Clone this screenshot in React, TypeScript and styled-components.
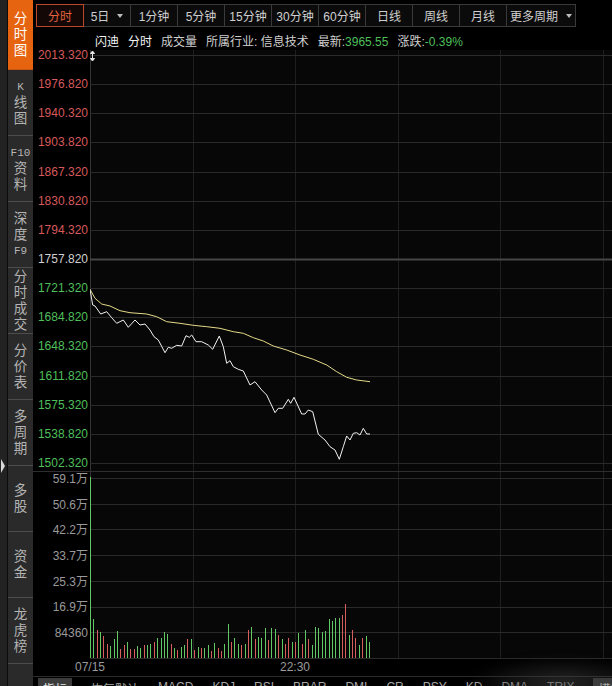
import React from 'react';
import styled, { createGlobalStyle } from 'styled-components';

const GlobalStyle = createGlobalStyle`
  html, body {
    margin: 0;
    padding: 0;
    background: #000;
  }
  body {
    font-family: "Liberation Sans", "Noto Sans CJK SC", sans-serif;
    overflow: hidden;
  }
`;

const PLOT_W = 522;
const PRICE_H = 421;
const VOL_H = 187;
const COL_W = 102.5;
const ROW_H = 29.14;
const VOL_ROW = 25.7;

type Tone = 'up' | 'down' | 'flat' | 'muted';

const toneColor: Record<Tone, string> = {
  up: '#d65a5a',
  down: '#4fbf5b',
  flat: '#cfcfcf',
  muted: '#9a9a9a',
};

// price ladder around the previous close
const priceLevels = Array.from({ length: 15 }, (_, i) => {
  const step = 7 - i;
  const value = 1757.82 + step * 36.5;
  const tone: Tone = step > 0 ? 'up' : step < 0 ? 'down' : 'flat';
  return { label: value.toFixed(3), tone };
});

const volumeLevels = ['59.1万', '50.6万', '42.2万', '33.7万', '25.3万', '16.9万', '84360'];

const sideTabs: { glyphs: string[]; active?: boolean }[] = [
  { glyphs: ['分', '时', '图'], active: true },
  { glyphs: ['K', '线', '图'] },
  { glyphs: ['F10', '资', '料'] },
  { glyphs: ['深', '度', 'F9'] },
  { glyphs: ['分', '时', '成', '交'] },
  { glyphs: ['分', '价', '表'] },
  { glyphs: ['多', '周', '期'] },
  { glyphs: ['多', '股'] },
  { glyphs: ['资', '金'] },
  { glyphs: ['龙', '虎', '榜'] },
];

const periods = ['5日', '1分钟', '5分钟', '15分钟', '30分钟', '60分钟', '日线', '周线', '月线', '更多周期'];

const indicators = ['恢复默认', 'MACD', 'KDJ', 'RSI', 'BRAR', 'DMI', 'CR', 'PSY', 'KD', 'DMA', 'TRIX'];

const pricePath = [
  [0, 239.3], [2.7, 255], [5, 256], [10.7, 264], [16.7, 261.7], [21.7, 267.7], [26.7, 273.3],
  [33.3, 270], [38.3, 277.3], [45, 270], [50, 275], [55, 274], [60, 280], [64, 286.7], [68.3, 290],
  [75, 302.7], [78.3, 297.3], [81.7, 298.3], [86.7, 295.3], [91.7, 296], [96, 285.7], [99.3, 287.3],
  [101.7, 285], [106, 291.7], [111.7, 291.7], [118.3, 295], [122.7, 299.3], [129.3, 286], [133.3, 296.7],
  [136.7, 313.3], [140, 310.7], [143.3, 316.7], [148.3, 319.3], [153.3, 321], [160, 335], [165, 331.7],
  [171.7, 340], [176.7, 345], [185, 362.7], [188.3, 358.3], [192.7, 358.3], [198.3, 349.3], [200.7, 353.3],
  [204, 347.3], [211.7, 364], [215, 364], [218.3, 360], [222.7, 361.7], [228.3, 384.3], [235, 390],
  [240, 396.7], [245, 400], [249.3, 409.3], [253.3, 396.7], [256.7, 386], [260, 390], [263.3, 383.3],
  [266.7, 382.7], [270, 385], [273.3, 378.3], [276.7, 384], [280, 384],
];

const avgPath = [
  [0, 239.3], [5, 248.3], [11.7, 254], [20, 256], [30, 260.7], [40, 262.7], [56.7, 264], [66.7, 266.7],
  [76.7, 271.7], [90, 273.3], [103.3, 275.3], [116.7, 276.7], [130, 278.3], [143.3, 281.7], [153.3, 283.3],
  [163.3, 287.7], [173.3, 291], [183.3, 296], [196.7, 300], [210, 305], [223.3, 309.3], [236.7, 315],
  [246.7, 321.7], [256.7, 327.3], [266.7, 330], [280, 331.7],
];

// per-minute volume: height in px, true when the minute closed up
const volumes: [number, boolean][] = [
  [181, true], [39, true], [28, false], [26, true], [22, false], [14, false], [12, true], [19, true],
  [27, true], [9, false], [13, false], [16, true], [9, false], [9, false], [12, true], [10, true],
  [13, false], [13, true], [14, true], [16, false], [20, true], [20, true], [26, true], [24, true],
  [14, false], [10, true], [8, false], [11, true], [13, true], [19, false], [19, true], [8, false],
  [11, true], [10, false], [10, true], [13, true], [7, false], [15, true], [10, false], [7, false],
  [14, true], [34, true], [16, false], [20, true], [14, true], [13, false], [14, true], [28, false],
  [31, true], [19, false], [21, true], [20, true], [30, true], [18, false], [30, true], [29, true],
  [23, false], [19, true], [14, false], [20, false], [16, true], [16, false], [25, true], [14, false],
  [28, true], [19, false], [13, true], [31, true], [30, true], [26, true], [27, true], [39, true],
  [37, true], [40, true], [40, true], [43, false], [54, false], [23, true], [28, false], [20, false],
  [13, true], [20, false], [22, true], [16, true],
];

const toPoints = (pts: number[][]) => pts.map(([x, y]) => `${x},${y}`).join(' ');

const Screen = styled.div`
  display: flex;
  width: 612px;
  height: 686px;
  overflow: hidden;
  background: #000;
  position: relative;
`;

const Rail = styled.div`
  width: 7px;
  flex-shrink: 0;
  background: #222;
  border-right: 1px solid #0c0c0c;
  display: flex;
  flex-direction: column;
  padding-top: 459px;
  box-sizing: content-box;
`;

const SideNav = styled.nav`
  width: 25px;
  flex-shrink: 0;
  background: #2a2a2a;
  display: flex;
  flex-direction: column;
`;

const SideTab = styled.div<{ $active?: boolean }>`
  height: ${({ $active }) => ($active ? 69 : 65)}px;
  flex-shrink: 0;
  border-bottom: 1px solid ${({ $active }) => ($active ? '#c9560f' : '#4c4c4c')};
  background: ${({ $active }) => ($active ? '#e6640f' : 'transparent')};
  color: ${({ $active }) => ($active ? '#fff' : '#b4b4b4')};
  display: flex;
  flex-direction: column;
  align-items: center;
  justify-content: center;
`;

const TabGlyph = styled.span<{ $latin?: boolean }>`
  display: block;
  height: 16px;
  line-height: 16px;
  font-family: ${({ $latin }) =>
    $latin ? '"Liberation Mono", monospace' : '"Liberation Sans", "Noto Sans CJK SC", sans-serif'};
  font-size: ${({ $latin }) => ($latin ? '11px' : '13.5px')};
`;

const Main = styled.main`
  flex: 1;
  min-width: 0;
  display: flex;
  flex-direction: column;
`;

const Toolbar = styled.div`
  height: 30px;
  padding: 4px 0 0 3px;
  box-sizing: border-box;
  display: flex;
  align-items: flex-start;
`;

const PeriodButton = styled.div<{ $active?: boolean; $width: number }>`
  width: ${({ $width }) => $width}px;
  height: 23px;
  box-sizing: border-box;
  margin-left: -1px;
  border: 1px solid ${({ $active }) => ($active ? '#b9482c' : '#3a3a3a')};
  position: relative;
  z-index: ${({ $active }) => ($active ? 1 : 0)};
  background: ${({ $active }) => ($active ? '#140806' : '#0b0b0b')};
  color: ${({ $active }) => ($active ? '#e0623e' : '#cfcfcf')};
  display: flex;
  align-items: center;
  justify-content: center;
  gap: 8px;
  font-size: 12px;
  &:first-child {
    margin-left: 0;
  }
`;

const Caret = styled.span`
  width: 0;
  height: 0;
  border-left: 3px solid transparent;
  border-right: 3px solid transparent;
  border-top: 4px solid #bdbdbd;
`;

const InfoRow = styled.div`
  height: 20px;
  padding-left: 62px;
  display: flex;
  align-items: center;
  gap: 9px;
  font-size: 12px;
  color: #cfcfcf;
  white-space: nowrap;
`;

const InfoItem = styled.span<{ $strong?: boolean }>`
  color: ${({ $strong }) => ($strong ? '#f4f4f4' : '#cfcfcf')};
`;

const InfoValue = styled.span`
  color: #4fbf5b;
`;

const Panel = styled.div<{ $height: number; $divider?: boolean }>`
  height: ${({ $height }) => $height}px;
  display: flex;
  flex-shrink: 0;
  border-top: ${({ $divider }) => ($divider ? '1px solid #2e2e2e' : 'none')};
  box-sizing: border-box;
`;

const AxisColumn = styled.div<{ $spread?: boolean }>`
  width: 57px;
  flex-shrink: 0;
  box-sizing: border-box;
  padding-right: 2px;
  display: flex;
  flex-direction: column;
  align-items: flex-end;
  justify-content: ${({ $spread }) => ($spread ? 'space-between' : 'flex-start')};
  padding-bottom: ${({ $spread }) => ($spread ? 3 : 0)}px;
  padding-top: ${({ $spread }) => ($spread ? 0 : 1)}px;
  gap: ${({ $spread }) => ($spread ? 0 : 13.7)}px;
`;

const AxisLabel = styled.span<{ $tone: Tone; $tight?: boolean }>`
  display: block;
  height: ${({ $tight }) => ($tight ? 10 : 12)}px;
  line-height: ${({ $tight }) => ($tight ? 10 : 12)}px;
  font-size: 12px;
  color: ${({ $tone }) => toneColor[$tone]};
  white-space: nowrap;
`;

const PlotSvg = styled.svg`
  display: block;
  flex-shrink: 0;
  background: #070707;
`;

const TimeAxis = styled.div`
  height: 19px;
  flex-shrink: 0;
  box-sizing: border-box;
  border-bottom: 1px solid #2c2c2c;
  padding-left: 57px;
  display: grid;
  grid-template-columns: repeat(5, ${COL_W}px);
  align-items: center;
  font-size: 12px;
  color: #9a9a9a;
`;

const TimeLabel = styled.span`
  margin-left: -15px;
`;

const IndicatorBar = styled.div`
  flex: 1;
  display: flex;
  align-items: flex-start;
  padding: 1px 0 0 5px;
  gap: 19px;
  font-size: 12px;
  color: #a8a8a8;
  white-space: nowrap;
  overflow: hidden;
`;

const IndicatorTab = styled.span<{ $boxed?: boolean }>`
  padding: 2px ${({ $boxed }) => ($boxed ? 5 : 0)}px 0;
  background: ${({ $boxed }) => ($boxed ? '#3c3c3c' : 'transparent')};
  color: ${({ $boxed }) => ($boxed ? '#e6e6e6' : '#a8a8a8')};
`;

const Smudge = styled.div`
  position: absolute;
  right: -10px;
  bottom: -14px;
  width: 150px;
  height: 42px;
  background: radial-gradient(ellipse at 60% 60%, rgba(70, 70, 70, 0.55), rgba(40, 40, 40, 0.25) 55%, transparent 75%);
  filter: blur(4px);
  pointer-events: none;
`;

const gridCols = Array.from({ length: 6 }, (_, k) => Math.round(k * COL_W) + 0.5);

const PriceChart = () => (
  <PlotSvg width={PLOT_W} height={PRICE_H}>
    {gridCols.map((x, k) => (
      <line key={x} x1={x} x2={x} y1={0} y2={PRICE_H} stroke={k === 0 ? '#343434' : '#1f1f1f'} />
    ))}
    {priceLevels.map((_, i) => {
      const y = Math.round(5 + i * ROW_H) + 0.5;
      const mid = i === 7;
      return (
        <line
          key={i}
          x1={0}
          x2={PLOT_W}
          y1={y}
          y2={y}
          stroke={mid ? '#474747' : '#2a2a2a'}
          strokeWidth={mid ? 2 : 1}
        />
      );
    })}
    {/* scale drag handle */}
    <g stroke="#e8e8e8" fill="#e8e8e8">
      <line x1={2.5} x2={2.5} y1={2} y2={10} />
      <path d="M0.5 3.5 L2.5 1 L4.5 3.5 Z" />
      <path d="M0.5 8.5 L2.5 11 L4.5 8.5 Z" />
    </g>
    <polyline points={toPoints(avgPath)} fill="none" stroke="#e4da88" strokeWidth={1} />
    <polyline points={toPoints(pricePath)} fill="none" stroke="#f2f2f2" strokeWidth={1} />
  </PlotSvg>
);

const VolumeChart = () => (
  <PlotSvg width={PLOT_W} height={VOL_H}>
    {gridCols.map((x, k) => (
      <line key={x} x1={x} x2={x} y1={0} y2={VOL_H} stroke={k === 0 ? '#343434' : '#1f1f1f'} />
    ))}
    {Array.from({ length: 8 }, (_, i) => {
      const y = Math.round(7 + i * VOL_ROW) - 0.5;
      return <line key={i} x1={0} x2={PLOT_W} y1={y} y2={y} stroke="#2a2a2a" />;
    })}
    {volumes.map(([h, up], i) => {
      const x = Math.round(i * 3.36) + 0.5;
      return (
        <line
          key={i}
          x1={x}
          x2={x}
          y1={VOL_H - 1}
          y2={VOL_H - 1 - h}
          stroke={up ? '#62c864' : '#d85e5e'}
        />
      );
    })}
  </PlotSvg>
);

const App: React.FC = () => (
  <>
    <GlobalStyle />
    <Screen>
      <Rail>
        <svg width={6} height={14}>
          <path d="M1 0 L5 7 L1 14 Z" fill="#d8d8d8" />
        </svg>
      </Rail>

      <SideNav>
        {sideTabs.map((tab, i) => (
          <SideTab key={i} $active={tab.active}>
            {tab.glyphs.map((g, j) => (
              <TabGlyph key={j} $latin={/^[A-Z0-9]+$/.test(g)}>
                {g}
              </TabGlyph>
            ))}
          </SideTab>
        ))}
      </SideNav>

      <Main>
        <Toolbar>
          <PeriodButton $active $width={48}>
            分时
          </PeriodButton>
          {periods.map((p) => (
            <PeriodButton key={p} $width={p === '更多周期' ? 70 : 48}>
              {p}
              {(p === '5日' || p === '更多周期') && <Caret />}
            </PeriodButton>
          ))}
        </Toolbar>

        <InfoRow>
          <InfoItem $strong>闪迪</InfoItem>
          <InfoItem $strong>分时</InfoItem>
          <InfoItem>成交量</InfoItem>
          <InfoItem>所属行业: 信息技术</InfoItem>
          <InfoItem>
            最新:<InfoValue>3965.55</InfoValue>
          </InfoItem>
          <InfoItem>
            涨跌:<InfoValue>-0.39%</InfoValue>
          </InfoItem>
        </InfoRow>

        <Panel $height={PRICE_H}>
          <AxisColumn $spread>
            {priceLevels.map((lv) => (
              <AxisLabel key={lv.label} $tone={lv.tone} $tight>
                {lv.label}
              </AxisLabel>
            ))}
          </AxisColumn>
          <PriceChart />
        </Panel>

        <Panel $height={VOL_H} $divider>
          <AxisColumn>
            {volumeLevels.map((v) => (
              <AxisLabel key={v} $tone="muted">
                {v}
              </AxisLabel>
            ))}
          </AxisColumn>
          <VolumeChart />
        </Panel>

        <TimeAxis>
          <TimeLabel>07/15</TimeLabel>
          <span />
          <TimeLabel>22:30</TimeLabel>
        </TimeAxis>

        <IndicatorBar>
          <IndicatorTab $boxed>指标</IndicatorTab>
          {indicators.map((name) => (
            <IndicatorTab key={name}>{name}</IndicatorTab>
          ))}
          <IndicatorTab $boxed>模板</IndicatorTab>
        </IndicatorBar>
      </Main>
      <Smudge />
    </Screen>
  </>
);

export default App;
